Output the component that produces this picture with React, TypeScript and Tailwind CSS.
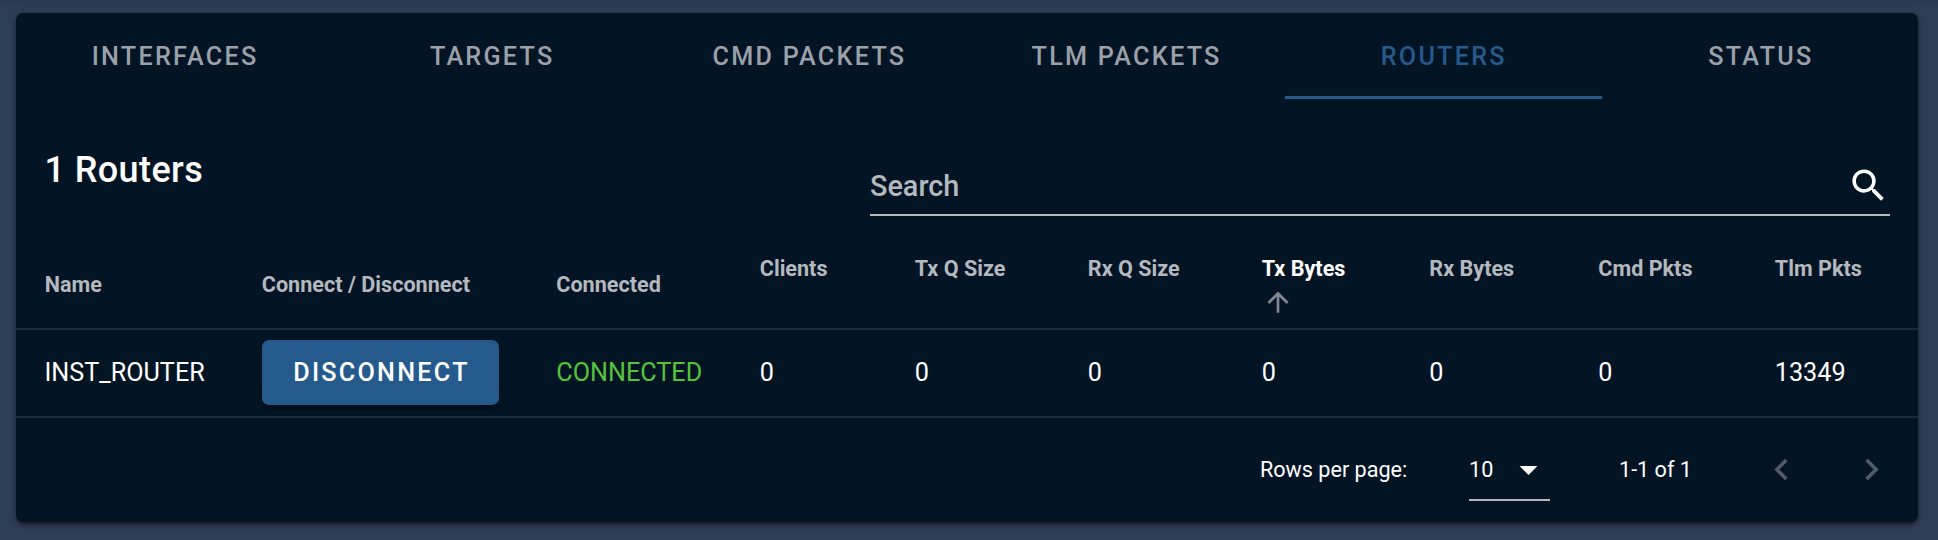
import React from "react";

const tabs = ["Interfaces", "Targets", "Cmd Packets", "Tlm Packets", "Routers", "Status"];

const sortable = ["Clients", "Tx Q Size", "Rx Q Size", "Tx Bytes", "Rx Bytes", "Cmd Pkts", "Tlm Pkts"];
const values = ["0", "0", "0", "0", "0", "0", "13349"];

const columns =
  "grid grid-cols-[217px_294.5px_203.5px_155px_173px_174px_167.5px_169px_176.5px_1fr]";

function Icon({ d, className }: { d: string; className: string }) {
  return (
    <svg viewBox="0 0 24 24" fill="currentColor" className={className}>
      <path d={d} />
    </svg>
  );
}

const magnify =
  "M9.5,3A6.5,6.5 0 0,1 16,9.5C16,11.11 15.41,12.59 14.44,13.73L14.71,14H15.5L20.5,19L19,20.5L14,15.5V14.71L13.73,14.44C12.59,15.41 11.11,16 9.5,16A6.5,6.5 0 0,1 3,9.5A6.5,6.5 0 0,1 9.5,3M9.5,5C7,5 5,7 5,9.5C5,12 7,14 9.5,14C12,14 14,12 14,9.5C14,7 12,5 9.5,5Z";
const arrowUp =
  "M13,20H11V8L5.5,13.5L4.08,12.08L12,4.16L19.92,12.08L18.5,13.5L13,8V20Z";
const menuDown = "M7,10L12,15L17,10H7Z";
const chevronLeft = "M15.41,16.58L10.83,12L15.41,7.41L14,6L8,12L14,18L15.41,16.58Z";
const chevronRight = "M8.59,16.58L13.17,12L8.59,7.41L10,6L16,12L10,18L8.59,16.58Z";

export default function App() {
  return (
    <div className="h-[540px] w-[1938px] overflow-hidden bg-[#2f3e57] bg-[linear-gradient(to_bottom,#2c3a52_0px,#2f3e57_16px)] pt-[13px] pr-5 pl-4 font-['Roboto',sans-serif] text-white">
      <div className="flex h-[509px] flex-col rounded-[7px] bg-[#031425] shadow-[0_5px_2px_-4px_rgba(0,0,0,0.3),0_3px_4px_rgba(0,0,0,0.3),0_2px_8px_rgba(0,0,0,0.22)]">
        <nav className="-mr-px grid h-[86px] grid-cols-6">
          {tabs.map((tab) => (
            <button
              key={tab}
              className={
                tab === "Routers"
                  ? "border-b-3 border-[#255a8c] pt-[5px] pl-px text-[25.2px] font-medium tracking-[2.25px] text-[#255a8c] uppercase"
                  : "border-b-3 border-transparent pt-[5px] pl-px text-[25.2px] font-medium tracking-[2.25px] text-[#9ba1a8] uppercase"
              }
            >
              {tab}
            </button>
          ))}
        </nav>

        <div className="flex h-[131px] items-start justify-between pr-7 pl-[28.5px]">
          <h1 className="mt-[43px] text-[36px] leading-[57px] font-medium tracking-[0.4px]">
            1 Routers
          </h1>
          <div className="mt-[58px] flex h-[59px] w-[1020px] items-center justify-between border-b-2 border-[#b4b9be]">
            <span className="text-[28.8px] leading-[36px] font-medium text-[#b4b9be]">
              Search
            </span>
            <Icon d={magnify} className="size-[43px]" />
          </div>
        </div>

        <div className={`${columns} h-[100px] border-b-2 border-[#1d2c3b] text-[21.6px] leading-[34px] font-bold text-[#b4b9be]`}>
          {["Name", "Connect / Disconnect", "Connected"].map((label) => (
            <div key={label} className="pt-[38px] pl-[28.8px]">
              {label}
            </div>
          ))}
          {sortable.map((label) => (
            <div key={label} className="pt-[22px] pl-[28.8px]">
              <div className={label === "Tx Bytes" ? "text-white" : ""}>{label}</div>
              {label === "Tx Bytes" && (
                <Icon d={arrowUp} className="size-[32px] text-[#7f8890]" />
              )}
            </div>
          ))}
        </div>

        <div className={`${columns} h-[88px] items-center border-b-2 border-[#1d2c3b] text-[25.2px]`}>
          <div className="pl-[28.5px]">INST_ROUTER</div>
          <div className="pl-[29px]">
            <button className="mb-px block h-[65px] w-[237px] rounded-[7px] bg-[#255a8c] pl-0.5 text-[25.2px] font-medium tracking-[2.25px] shadow-[0_3px_4px_rgba(0,0,0,0.4)]">
              DISCONNECT
            </button>
          </div>
          <div className="pl-[28.8px] text-[#56c43a]">CONNECTED</div>
          {values.map((value, i) => (
            <div key={sortable[i]} className="pl-[28.8px]">
              {value}
            </div>
          ))}
        </div>

        <footer className="flex h-[104px] items-center text-[21.6px]">
          <span className="ml-[1244px] w-[209px]">Rows per page:</span>
          <div className="flex h-[62px] w-[81px] items-center border-b-2 border-[#b4b9be]">
            <span className="w-[38px] pt-0.5">10</span>
            <Icon d={menuDown} className="size-[43px] shrink-0" />
          </div>
          <span className="ml-[69px] w-[141px]">1-1 of 1</span>
          <Icon d={chevronLeft} className="mb-0.5 size-[43px] text-[#4f5b66]" />
          <Icon d={chevronRight} className="mb-0.5 ml-[47px] size-[43px] text-[#4f5b66]" />
        </footer>
      </div>
    </div>
  );
}
